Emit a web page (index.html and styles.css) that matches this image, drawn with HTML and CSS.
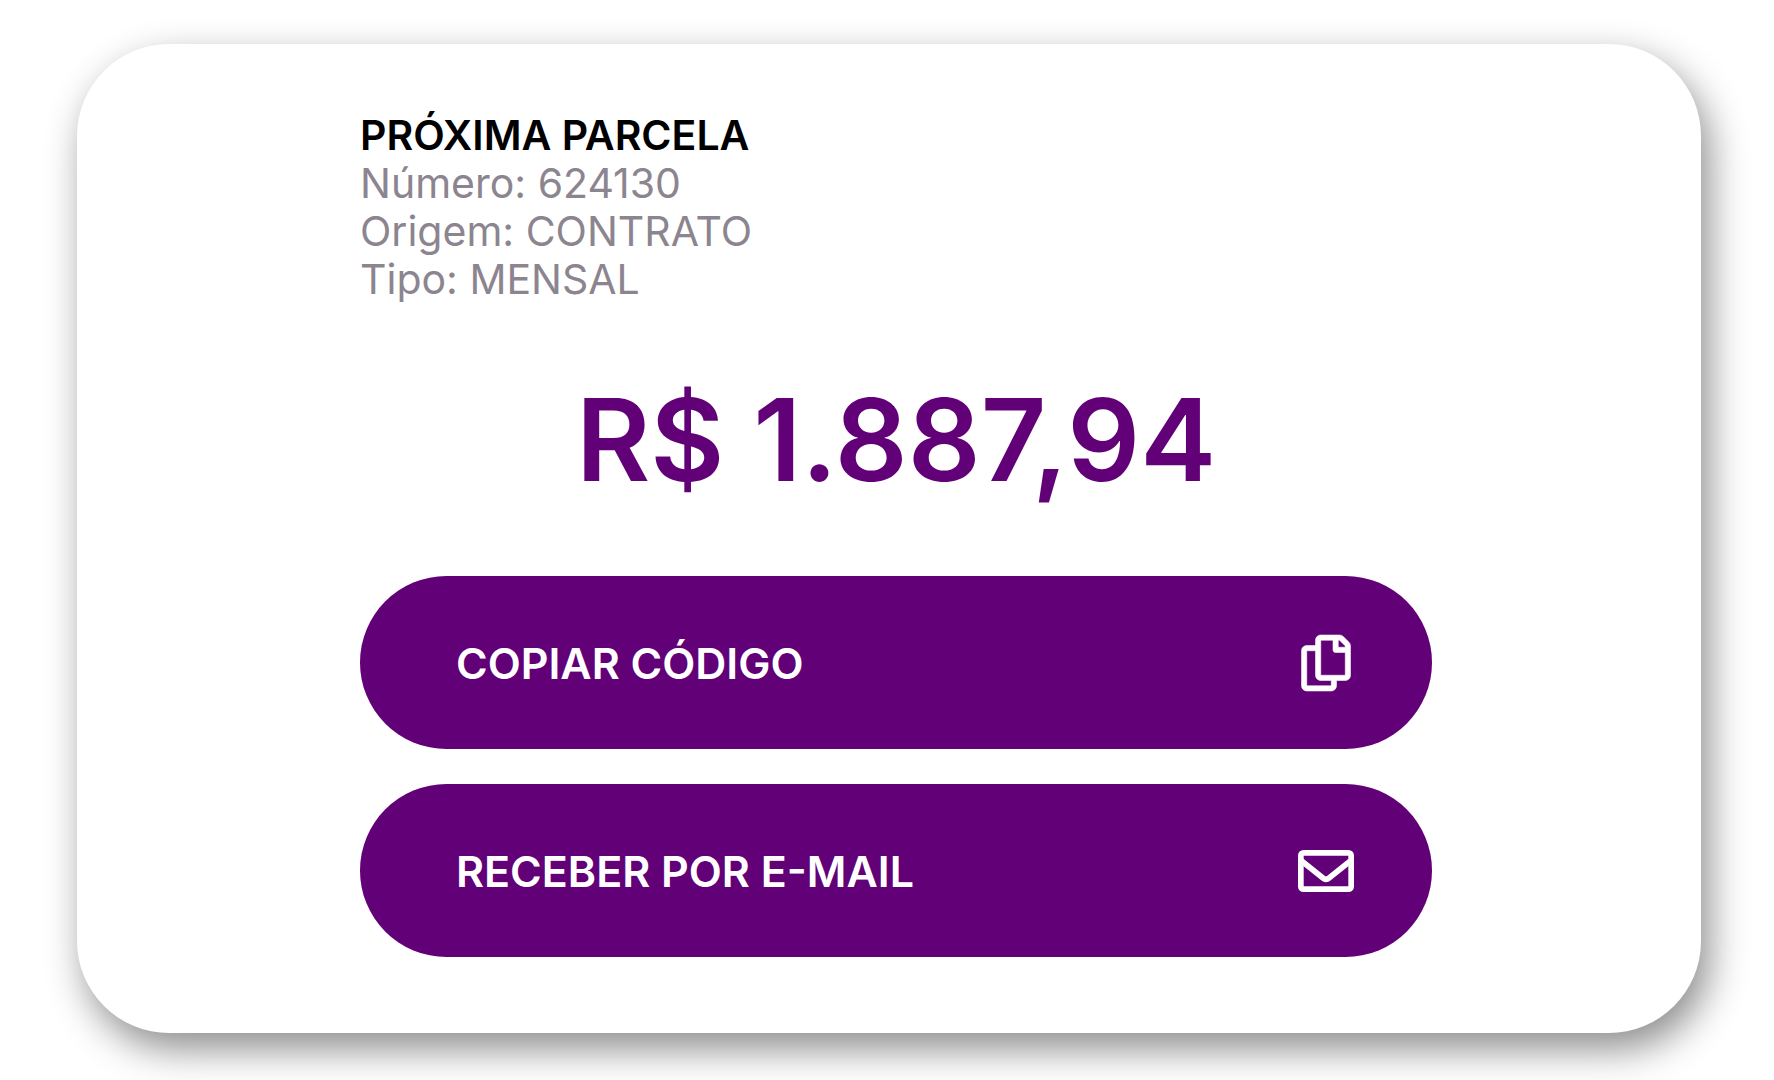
FILE: index.html
```html
<!DOCTYPE html>
<html lang="pt-BR">
<head>
  <meta charset="UTF-8">
  <meta name="viewport" content="width=device-width, initial-scale=1.0">
  <title>Próxima parcela</title>
  <link rel="stylesheet" href="styles.css">
</head>
<body>
  <main class="card">
    <section class="info">
      <h1 class="info-title">PRÓXIMA PARCELA</h1>
      <p>Número: 624130</p>
      <p>Origem: CONTRATO</p>
      <p>Tipo: MENSAL</p>
    </section>

    <p class="price">R$ 1.887,94</p>

    <div class="actions">
      <button type="button" class="btn">
        <span>COPIAR CÓDIGO</span>
        <svg class="icon" viewBox="0 0 512 512" aria-hidden="true">
          <path transform="translate(32 0)" fill="currentColor" stroke="currentColor" stroke-width="5" d="M433.941 65.941l-51.882-51.882A48 48 0 0 0 348.118 0H176c-26.51 0-48 21.49-48 48v48H48c-26.51 0-48 21.49-48 48v320c0 26.51 21.49 48 48 48h224c26.51 0 48-21.49 48-48v-48h80c26.51 0 48-21.49 48-48V99.882a48 48 0 0 0-14.059-33.941zM266 464H54a6 6 0 0 1-6-6V150a6 6 0 0 1 6-6h74v224c0 26.51 21.49 48 48 48h96v42a6 6 0 0 1-6 6zm128-96H182a6 6 0 0 1-6-6V54a6 6 0 0 1 6-6h106v88c0 13.255 10.745 24 24 24h88v202a6 6 0 0 1-6 6zm6-256h-64V48h9.632c1.591 0 3.117.632 4.243 1.757l48.368 48.368a6 6 0 0 1 1.757 4.243V112z"/>
        </svg>
      </button>
      <button type="button" class="btn">
        <span>RECEBER POR E-MAIL</span>
        <svg class="icon" viewBox="0 0 512 512" aria-hidden="true">
          <g fill="none" stroke="currentColor" stroke-width="52">
            <rect x="26" y="90" width="460" height="332" rx="24"/>
            <path d="M28 160L228 320Q256 342 284 320L484 160"/>
          </g>
        </svg>
      </button>
    </div>
  </main>
</body>
</html>
```
FILE: styles.css
```css
* {
  box-sizing: border-box;
}
body {
  font-family: Inter, "Liberation Sans", sans-serif;
  margin: 0;
  padding: 44px 73px 47px 77px;
  background-color: #fff;
}
h1, p {
  margin: 0;
}
.card {
  display: flex;
  flex-direction: column;
  gap: 76px;
  padding: 67px 269px 76px 283px;
  border-radius: 92px;
  background-color: #fff;
  box-shadow: 8px 16px 38px rgba(0, 0, 0, 0.45);
}
.info {
  font-size: 41px;
  line-height: 48px;
  color: #8c858f;
}
.info-title {
  font-size: 41px;
  font-weight: 600;
  line-height: 48px;
  color: #000;
}
.price {
  font-size: 114px;
  font-weight: 600;
  line-height: 121px;
  text-align: center;
  color: #620078;
}
.actions {
  display: flex;
  flex-direction: column;
  gap: 35px;
}
.btn {
  display: flex;
  align-items: center;
  justify-content: space-between;
  width: 100%;
  height: 173px;
  padding: 0 78px 0 96px;
  border: none;
  border-radius: 87px;
  background-color: #620078;
  color: #fff;
  font-family: inherit;
  font-size: 43px;
  font-weight: 600;
  cursor: pointer;
}
.icon {
  width: 56px;
  height: 56px;
  overflow: visible;
}
```
